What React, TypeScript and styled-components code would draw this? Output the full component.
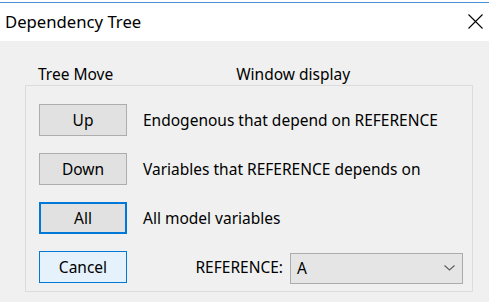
import React from "react";
import styled, { createGlobalStyle, css } from "styled-components";

const Global = createGlobalStyle`
  html, body { margin: 0; padding: 0; background: #ffffff; }
  body { font-family: "Noto Sans", "Open Sans", sans-serif; color: #000; }
`;

const Window = styled.div`
  width: 489px;
  height: 302px;
  display: flex;
  flex-direction: column;
  overflow: hidden;
  background: #f0f0f0;
`;

const TopEdge = styled.div`
  height: 2px;
  background: #ffffff;
  border-bottom: 1px solid #4a8fd8;
`;

const TitleBar = styled.div`
  height: 38px;
  background: #ffffff;
  display: flex;
  align-items: center;
  justify-content: space-between;
  padding: 0 6px 0 5px;
`;

const Title = styled.div`
  font-size: 16.7px;
  line-height: 20px;
  margin-top: 0px;
`;

const CloseButton = styled.div`
  width: 15px;
  height: 15px;
  display: flex;
  margin-top: -2px;
`;

const Body = styled.div`
  flex: 1;
  display: flex;
  flex-direction: column;
  padding: 23px 0 0 25px;
`;

const Header = styled.div`
  display: flex;
  height: 20px;
  font-size: 15.5px;
  line-height: 20px;
`;

const HeaderLabel = styled.div<{ $left: number }>`
  margin-left: ${(p) => p.$left}px;
`;

const Group = styled.div`
  width: 448px;
  height: 207px;
  box-sizing: border-box;
  border: 1px solid #dcdcdc;
  margin-top: 1px;
  padding: 18px 9px 0 13px;
  display: grid;
  grid-template-columns: 88px 1fr;
  grid-auto-rows: 32px;
  column-gap: 16px;
  row-gap: 17px;
  align-items: center;
`;

const Button = styled.div<{ $variant?: "default" | "focused" | "hover" }>`
  height: 32px;
  box-sizing: border-box;
  display: flex;
  align-items: center;
  justify-content: center;
  font-size: 15.5px;
  background: #e1e1e1;
  border: 1px solid #adadad;
  ${(p) =>
    p.$variant === "focused" &&
    css`
      border: 2px solid #0078d7;
    `}
  ${(p) =>
    p.$variant === "hover" &&
    css`
      background: #e5f1fb;
      border: 1px solid #0078d7;
    `}
`;

const Label = styled.div`
  font-size: 15.5px;
  line-height: 20px;
  white-space: nowrap;
`;

const RefRow = styled.div`
  display: flex;
  align-items: center;
  justify-content: flex-end;
  gap: 7px;
`;

const Combo = styled.div`
  width: 173px;
  height: 31px;
  box-sizing: border-box;
  border: 1px solid #acacac;
  background: #e5e5e5;
  display: flex;
  align-items: center;
  justify-content: space-between;
  padding: 0 7px 0 6px;
  font-size: 15.5px;
  margin-top: 2px;
`;

const Chevron = () => (
  <svg width="11" height="6" viewBox="0 0 11 6">
    <path d="M0.5 0.5 L5.5 5 L10.5 0.5" fill="none" stroke="#606060" strokeWidth="1.2" />
  </svg>
);

const CloseIcon = () => (
  <svg width="15" height="15" viewBox="0 0 15 15">
    <path d="M0.5 0.5 L14.5 14.5 M14.5 0.5 L0.5 14.5" stroke="#000" strokeWidth="1.1" />
  </svg>
);

export default function App() {
  return (
    <>
      <Global />
      <Window>
        <TopEdge />
        <TitleBar>
          <Title>Dependency Tree</Title>
          <CloseButton>
            <CloseIcon />
          </CloseButton>
        </TitleBar>
        <Body>
          <Header>
            <HeaderLabel $left={13}>Tree Move</HeaderLabel>
            <HeaderLabel $left={123}>Window display</HeaderLabel>
          </Header>
          <Group>
            <Button>Up</Button>
            <Label>Endogenous that depend on REFERENCE</Label>
            <Button>Down</Button>
            <Label>Variables that REFERENCE depends on</Label>
            <Button $variant="focused">All</Button>
            <Label>All model variables</Label>
            <Button $variant="hover">Cancel</Button>
            <RefRow>
              <Label>REFERENCE:</Label>
              <Combo>
                <span>A</span>
                <Chevron />
              </Combo>
            </RefRow>
          </Group>
        </Body>
      </Window>
    </>
  );
}
